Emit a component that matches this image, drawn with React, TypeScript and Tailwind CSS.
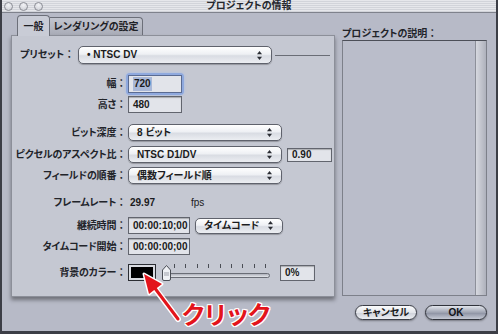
import React from "react";

const FONT = "font-['Liberation_Sans','Noto_Sans_CJK_JP',sans-serif] [font-feature-settings:'palt']";

function Arrows() {
  return (
    <svg width="7" height="11" viewBox="0 0 7 11" className="shrink-0">
      <path d="M3.5 1 L6 4.2 L1 4.2 Z" fill="#2a2c33" />
      <path d="M3.5 10 L6 6.8 L1 6.8 Z" fill="#2a2c33" />
    </svg>
  );
}

function Popup({ label, className }: { label: string; className: string }) {
  return (
    <div
      className={`flex items-center justify-between rounded-[5px] border border-[#5f626c] bg-[linear-gradient(#ffffff,#eef0f4_45%,#d9dce3_55%,#eceef2)] pl-[8px] pr-[8px] shadow-[0_1px_1px_rgba(0,0,0,0.25)] ${className}`}
    >
      <span className="text-[10px] font-bold text-[#1a1b20] leading-none">{label}</span>
      <Arrows />
    </div>
  );
}

function Field({ value, className }: { value: string; className: string }) {
  return (
    <div
      className={`flex items-center border border-[#62656e] bg-[#e2e4ea] pl-[4px] text-[10px] font-bold leading-none text-[#1a1b20] shadow-[inset_0_1px_1px_rgba(0,0,0,0.25)] ${className}`}
    >
      {value}
    </div>
  );
}

function Colon() {
  return <span className="[font-feature-settings:normal]">：</span>;
}

function Label({ text }: { text: string }) {
  return (
    <div className="w-[114px] shrink-0 text-right text-[10px] font-bold leading-none tracking-[-0.2px] text-[#22242a]">
      {text}
      <Colon />
    </div>
  );
}

function Light() {
  return <div className="h-[9px] w-[9px] rounded-full border border-[#8b8d95] bg-[radial-gradient(circle_at_50%_30%,#f2f3f6,#c9cbd2)]" />;
}

export default function App() {
  return (
    <div className={`relative h-[334px] w-[498px] overflow-hidden bg-[#b7bac7] ${FONT}`}>
      <div className="flex h-full flex-col border-l-[2px] border-r-[2px] border-b-[3px] border-[#3c3e46]">
        {/* title bar */}
        <div className="relative flex h-[13px] shrink-0 items-center border-b border-[#7f828c] bg-[repeating-linear-gradient(180deg,#e6e7eb_0px,#e6e7eb_1px,#d2d4da_1px,#d2d4da_2px)] pl-[2px]">
          <div className="flex gap-[6px]">
            <Light />
            <Light />
            <Light />
          </div>
          <div className="absolute inset-0 flex items-center justify-center text-[10px] font-bold leading-none text-[#25272d]">
            プロジェクトの情報
          </div>
        </div>

        <div className="flex flex-1">
          {/* left: tabs + panel */}
          <div className="ml-[9px] flex w-[324px] flex-col">
            <div className="flex h-[22px] items-end pl-[6px]">
              <div className="relative z-10 -mb-[1px] flex h-[21px] w-[33px] items-center justify-center rounded-t-[4px] border border-b-0 border-[#6c6f79] bg-[#c9ccd6] text-[10px] font-bold text-[#1f2126]">
                一般
              </div>
              <div className="flex h-[18px] w-[93px] items-center justify-center rounded-tr-[4px] border border-l-0 border-b-0 border-[#6c6f79] bg-[linear-gradient(#c2c5cf,#a9acb7)] text-[10px] font-bold text-[#1f2126]">
                レンダリングの設定
              </div>
            </div>
            <div className="flex h-[262px] flex-col border border-[#8c8f99] bg-[#c5c8d2] shadow-[0_3px_4px_rgba(0,0,0,0.4)]">
              {/* preset */}
              <div className="mt-[10px] flex h-[18px] items-center">
                <div className="ml-[8px] w-[58px] text-[10px] font-bold leading-none text-[#22242a]">
                  プリセット
                  <Colon />
                </div>
                <Popup label="• NTSC DV" className="h-[18px] w-[194px]" />
                <div className="ml-[3px] h-px w-[55px] bg-[#6a6d76]" />
              </div>
              {/* width */}
              <div className="mt-[11px] flex h-[18px] items-center">
                <Label text="幅" />
                <div className="ml-[2px] rounded-[2px] shadow-[0_0_0_2px_#8fa9de,0_0_3px_2px_#a8bde6]">
                  <div className="flex h-[18px] w-[54px] items-center border border-[#5a6b92] bg-[#e2e4ea] pl-[4px] text-[10px] font-bold leading-none">
                    <span className="bg-[#a9b8d8] px-px py-[2px] text-[#1a1b20]">720</span>
                  </div>
                </div>
              </div>
              {/* height */}
              <div className="mt-[3px] flex h-[17px] items-center">
                <Label text="高さ" />
                <Field value="480" className="ml-[2px] h-[17px] w-[54px]" />
              </div>
              {/* bit depth */}
              <div className="mt-[11px] flex h-[17px] items-center">
                <Label text="ビット深度" />
                <Popup label="8 ビット" className="ml-[2px] h-[17px] w-[154px]" />
              </div>
              {/* aspect */}
              <div className="mt-[5px] flex h-[17px] items-center">
                <Label text="ピクセルのアスペクト比" />
                <Popup label="NTSC D1/DV" className="ml-[2px] h-[17px] w-[154px]" />
                <Field value="0.90" className="ml-[5px] h-[14px] w-[45px]" />
              </div>
              {/* field order */}
              <div className="mt-[4px] flex h-[17px] items-center">
                <Label text="フィールドの順番" />
                <Popup label="偶数フィールド順" className="ml-[2px] h-[17px] w-[154px]" />
              </div>
              {/* frame rate */}
              <div className="mt-[11px] flex h-[16px] items-center">
                <Label text="フレームレート" />
                <div className="ml-[4px] w-[61px] text-[10px] font-bold leading-none text-[#1a1b20]">29.97</div>
                <div className="text-[10px] leading-none text-[#1a1b20]">fps</div>
              </div>
              {/* duration */}
              <div className="mt-[6px] flex h-[17px] items-center">
                <Label text="継続時間" />
                <Field value="00:00:10;00" className="ml-[2px] h-[17px] w-[62px]" />
                <Popup label="タイムコード" className="ml-[5px] h-[16px] w-[88px]" />
              </div>
              {/* tc start */}
              <div className="mt-[4px] flex h-[17px] items-center">
                <Label text="タイムコード開始" />
                <Field value="00:00:00;00" className="ml-[2px] h-[17px] w-[62px]" />
              </div>
              {/* bg color */}
              <div className="mt-[9px] flex h-[17px] items-center">
                <Label text="背景のカラー" />
                <div className="ml-[2px] flex h-[17px] w-[28px] items-center justify-center border border-[#2b2d33] bg-[#d9dbe1]">
                  <div className="h-[11px] w-[22px] bg-black" />
                </div>
                <div className="relative ml-[6px] h-[17px] w-[110px]">
                  <div className="absolute left-[12px] top-0 flex w-[92px] justify-between">
                    {Array.from({ length: 9 }).map((_, i) => (
                      <div key={i} className="h-[4px] w-px bg-[#4a4d55]" />
                    ))}
                  </div>
                  <div className="absolute left-[2px] top-[9px] h-[5px] w-[106px] rounded-full border border-[#6a6d76] bg-[linear-gradient(#aeb1bb,#e4e6eb)]" />
                  <svg className="absolute left-0 top-[1px]" width="9" height="16" viewBox="0 0 9 16">
                    <path d="M4.5 0.5 L8.5 5 L8.5 14 Q8.5 15.5 7 15.5 L2 15.5 Q0.5 15.5 0.5 14 L0.5 5 Z" fill="#eef0f4" stroke="#4a4d55" />
                    <path d="M2 8 L7 8 M2 10 L7 10" stroke="#9da0aa" />
                  </svg>
                </div>
                <Field value="0%" className="ml-[8px] h-[16px] w-[35px]" />
              </div>
            </div>
          </div>

          {/* right: description */}
          <div className="ml-[7px] flex w-[145px] flex-col pt-[16px]">
            <div className="h-[11px] text-[10px] font-bold leading-none text-[#22242a]">
              プロジェクトの説明
              <Colon />
            </div>
            <div className="flex h-[256px] border border-t-[#4c4f58] border-[#7d808a] bg-[#babdca]">
              <div className="flex-1" />
              <div className="w-[11px] border-l border-[#8d909a] bg-[linear-gradient(90deg,#d6d8df,#aeb1bc)]" />
            </div>
          </div>
        </div>

        {/* buttons */}
        <div className="mb-[11px] flex shrink-0 justify-end gap-[8px] pr-[9px]">
          <div className="flex h-[15px] w-[62px] items-center justify-center rounded-full border border-[#3b3e47] bg-[linear-gradient(#fbfcfd,#e3e5ea_50%,#cdd0d8_51%,#eceef2)] text-[10px] font-bold leading-none text-[#1a1b20] shadow-[0_1px_2px_rgba(0,0,0,0.35)]">
            キャンセル
          </div>
          <div className="flex h-[15px] w-[62px] items-center justify-center rounded-full border border-[#30333b] bg-[linear-gradient(#e2e5ec,#9ea3b1_50%,#8a8fa0_51%,#c5c9d4)] text-[10px] font-bold leading-none text-[#111216] shadow-[0_1px_2px_rgba(0,0,0,0.35)]">
            OK
          </div>
        </div>
      </div>

      {/* annotation */}
      <svg className="pointer-events-none absolute left-0 top-0" width="498" height="334">
        <path d="M153 286 L178 319" stroke="#ffffff" strokeWidth="6" strokeLinecap="round" />
        <path d="M144 274 L149 294 L162 284 Z" fill="#ffffff" stroke="#ffffff" strokeWidth="3" strokeLinejoin="round" />
        <path d="M154 287 L178 319" stroke="#e3141b" strokeWidth="3" strokeLinecap="round" />
        <path d="M144 274 L149 294 L162 284 Z" fill="#e3141b" />
      </svg>
      <div className="absolute left-[181px] top-[303px] text-[25px] font-bold leading-none tracking-[-3px] text-[#e3141b] [font-feature-settings:normal] [text-shadow:1px_1px_0_#fff,-1px_-1px_0_#fff,1px_-1px_0_#fff,-1px_1px_0_#fff,0_1px_0_#fff,0_-1px_0_#fff,1px_0_0_#fff,-1px_0_0_#fff]">
        クリック
      </div>
    </div>
  );
}
